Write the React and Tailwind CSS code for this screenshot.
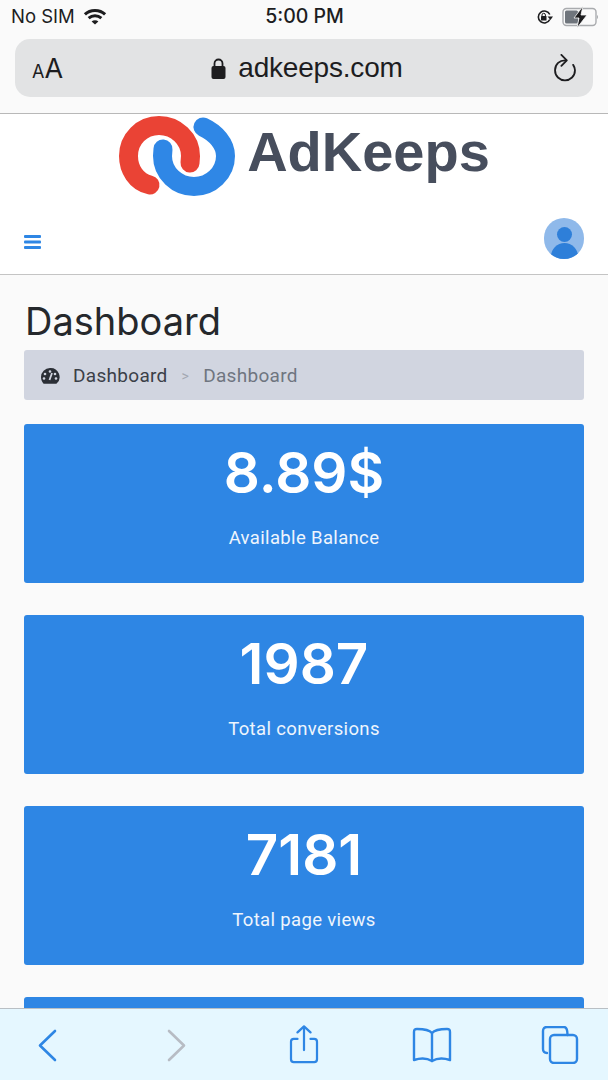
const roboto = { fontFamily: 'Roboto, sans-serif' }
const inter = { fontFamily: 'Inter, sans-serif' }

const stats = [
  { value: '8.89$', label: 'Available Balance' },
  { value: '1987', label: 'Total conversions' },
  { value: '7181', label: 'Total page views' },
  { value: '', label: '' },
]

function StatusBar() {
  return (
    <div className="h-[39px] shrink-0 flex items-center justify-between pl-[11px] pr-[10px] pb-[6px] text-[#1d1d1f] font-['Inter',sans-serif]">
      <div className="w-[200px] flex items-center gap-[8px]">
        <span className="text-[18.5px]">No SIM</span>
        <svg width="24" height="17" viewBox="0 0 22 16" fill="none" stroke="#1d1d1f" strokeWidth="2.8">
          <path d="M1.5 6 C6.5 1 15.5 1 20.5 6" />
          <path d="M5 9.5 C8.5 6.5 13.5 6.5 17 9.5" />
          <path d="M11 15.5 L7.8 12.6 C9.5 11.2 12.5 11.2 14.2 12.6 Z" fill="#1d1d1f" strokeWidth="0" />
        </svg>
      </div>
      <span className="text-[19.5px] font-medium">5:00 PM</span>
      <div className="w-[200px] flex items-center justify-end gap-[8px]">
        <svg width="18" height="16" viewBox="0 0 18 16" fill="none">
          <path d="M13.800 10.500 A6 6 0 1 1 13.800 5.500" stroke="#1d1d1f" strokeWidth="1.600" />
          <path d="M11.500 7.500 L14.500 11 L17 7.500 Z" fill="#1d1d1f" />
          <rect x="5" y="7" width="5.500" height="4.500" rx="0.6" fill="#1d1d1f" />
          <path d="M6 7V6a1.700 1.700 0 0 1 3.400 0v1" stroke="#1d1d1f" strokeWidth="1" />
        </svg>
        <svg width="36" height="22" viewBox="0 0 36 22" fill="none">
          <rect x="1" y="2.500" width="33" height="17" rx="3.5" stroke="#a9abae" strokeWidth="1.4" />
          <rect x="3" y="4.500" width="13" height="13" rx="1.5" fill="#6f757c" />
          <path d="M35 9v4c.7-.4 1-1.100 1-2s-.3-1.600-1-2z" fill="#a9abae" />
          <path d="M21 0 L12 12 H17 L15 22 L25 9 H19 Z" fill="#1d1d1f" stroke="#fafafa" strokeWidth="0.8" />
        </svg>
      </div>
    </div>
  )
}

function UrlBar() {
  return (
    <div className="shrink-0 pb-[16px] border-b border-[#b8b8b8] px-[15px]">
      <div className="h-[58px] rounded-[15px] bg-[#e2e3e4] flex items-center justify-between pl-[17px] pr-[15px] text-[#1d1d1f] font-['Inter',sans-serif]">
        <div className="w-[70px] flex items-baseline">
          <span className="text-[18px] leading-none">A</span>
          <span className="text-[27px] leading-none">A</span>
        </div>
        <div className="flex items-center gap-[12px]">
          <svg width="15" height="21" viewBox="0 0 15 21" fill="none">
            <rect x="0.5" y="8" width="14" height="13" rx="2" fill="#1d1d1f" />
            <path d="M3.500 9V5.500a4 4 0 0 1 8 0V9" stroke="#1d1d1f" strokeWidth="1.8" />
          </svg>
          <span className="text-[28px] leading-none tracking-[-0.2px] font-['Liberation_Sans',sans-serif]">adkeeps.com</span>
        </div>
        <div className="w-[66px] flex justify-end">
          <svg width="26" height="29" viewBox="0 0 26 32" fill="none" stroke="#1d1d1f" strokeWidth="2" strokeLinecap="round" strokeLinejoin="round">
            <path d="M14 7 C7 6.500 2 11.500 2 18 C2 24.500 7 29 13 29 C19 29 24 24.500 24 18 C24 15.500 23 13.500 22 12" />
            <path d="M9 1 L15 7 L9 13" />
          </svg>
        </div>
      </div>
    </div>
  )
}

function Logo() {
  return (
    <div className="h-[84px] shrink-0 bg-white flex items-center justify-center">
      <div className="flex items-center gap-[11px]">
        <svg width="118" height="84" viewBox="0 0 118 84" fill="none" strokeWidth="19" strokeLinecap="round">
          <path d="M32 71 C18 68 10.500 55 10.500 42 C10.500 25 24 11.500 41 11.500 C58 11.500 72.500 25 72.500 42 L72 49" stroke="#ea4335" />
          <path d="M85 13 C98 19 107.500 30 107.500 42 C107.500 59 93 72.500 76 72.500 C59 72.500 44.500 59 44.500 42 L45 35" stroke="#2f87e6" />
        </svg>
        <span className="pb-[8px] text-[56px] leading-none font-bold text-[#474e5d] font-['Liberation_Sans',sans-serif]">AdKeeps</span>
      </div>
    </div>
  )
}

function NavBar() {
  return (
    <div className="h-[77px] shrink-0 bg-white border-b border-[#c4c4c4] flex items-start justify-between px-[24px] pt-[20px]">
      <svg width="17" height="14" viewBox="0 0 17 14" fill="#2e86e4" className="mt-[17px]">
        <rect width="17" height="3" rx="1" />
        <rect y="5.500" width="17" height="3" rx="1" />
        <rect y="11" width="17" height="3" rx="1" />
      </svg>
      <div className="w-[40px] h-[41px] rounded-full bg-[#8fb9ea] overflow-hidden flex flex-col items-center">
        <div className="w-[15px] h-[15px] shrink-0 rounded-full bg-[#2e7fd9] mt-[9px]" />
        <div className="w-[27px] h-[27px] shrink-0 rounded-full bg-[#2e7fd9] mt-[1px]" />
      </div>
    </div>
  )
}

function Breadcrumb() {
  return (
    <div className="h-[50px] rounded-[3px] bg-[#d1d5e0] flex items-center pl-[16px] pt-[2px] text-[19px] tracking-[0.3px]" style={roboto}>
      <svg width="20" height="18" viewBox="0 0 20 18" className="mr-[13px]">
        <path d="M10 1a9 9 0 0 0-9 9c0 2.600 1 5 2.600 6.800h12.800A9 9 0 0 0 10 1z" fill="#2b2f36" />
        <circle cx="10" cy="4.500" r="1.300" fill="#d1d5e0" />
        <circle cx="5" cy="7" r="1.300" fill="#d1d5e0" />
        <circle cx="15" cy="7" r="1.300" fill="#d1d5e0" />
        <circle cx="4" cy="11.500" r="1.300" fill="#d1d5e0" />
        <circle cx="16" cy="11.500" r="1.300" fill="#d1d5e0" />
        <path d="M12 6 L9.500 13" stroke="#d1d5e0" strokeWidth="1.800" />
      </svg>
      <span className="text-[#3b4048]">Dashboard</span>
      <span className="mx-[14px] text-[14px] text-[#a3a8b2]">&gt;</span>
      <span className="text-[#6f7580]">Dashboard</span>
    </div>
  )
}

function StatCard({ value, label }) {
  return (
    <div className="h-[159px] shrink-0 rounded-[3px] bg-[#2e86e4] text-white text-center pt-[16px]">
      <div className="text-[56.5px] leading-[66px] font-semibold" style={inter}>{value}</div>
      <div className="mt-[19px] text-[18.5px] leading-[27px] tracking-[0.35px] text-[#eef5fd]" style={roboto}>{label}</div>
    </div>
  )
}

function Toolbar() {
  return (
    <div className="h-[72px] shrink-0 bg-[#e5f7ff] border-t border-[#b9bfc4] flex items-start pl-[37px]">
      <svg width="20" height="33" viewBox="0 0 20 33" fill="none" stroke="#2e86e4" strokeWidth="2.600" strokeLinecap="round" strokeLinejoin="round" className="mt-[20px]">
        <path d="M18 2 L3 16.500 L18 31" />
      </svg>
      <svg width="20" height="33" viewBox="0 0 20 33" fill="none" stroke="#b7bcc4" strokeWidth="2.600" strokeLinecap="round" strokeLinejoin="round" className="mt-[20px] ml-[110px]">
        <path d="M2 2 L17 16.500 L2 31" />
      </svg>
      <svg width="32" height="39" viewBox="0 0 32 42" fill="none" stroke="#2e86e4" strokeWidth="2.400" strokeLinecap="round" strokeLinejoin="round" className="mt-[16px] ml-[101px]">
        <path d="M9 15 H5 a3 3 0 0 0-3 3 V37 a3 3 0 0 0 3 3 H27 a3 3 0 0 0 3-3 V18 a3 3 0 0 0-3-3 H23" />
        <path d="M16 27 V2 M9 8 L16 1.500 L23 8" />
      </svg>
      <svg width="40" height="36" viewBox="0 0 40 36" fill="none" stroke="#2e86e4" strokeWidth="2.400" strokeLinecap="round" strokeLinejoin="round" className="mt-[18px] ml-[92px]">
        <path d="M20 6 C17 2.500 11 2 5 2 Q2 2 2 5 V33 C8 31 15 31 20 34 C25 31 32 31 38 33 V5 Q38 2 35 2 C29 2 23 2.500 20 6 Z" />
        <path d="M20 6 V34" />
      </svg>
      <svg width="38" height="38" viewBox="0 0 38 38" fill="none" stroke="#2e86e4" strokeWidth="2.400" strokeLinecap="round" strokeLinejoin="round" className="mt-[17px] ml-[89px]">
        <path d="M6 27 Q2 27 2 23 V5 Q2 1 6 1 H23 Q26.500 1 26.500 9" />
        <rect x="9" y="9" width="27" height="28" rx="4" />
      </svg>
    </div>
  )
}

export default function App() {
  return (
    <div className="w-[608px] h-[1080px] flex flex-col overflow-hidden bg-[#fafafa]">
      <StatusBar />
      <UrlBar />
      <Logo />
      <NavBar />
      <main className="flex-1 min-h-0 overflow-hidden px-[24px] pt-[22px]">
        <h1 className="text-[38px] leading-[49px] mb-[4px] text-[#25282c] font-normal pl-[1px]" style={inter}>Dashboard</h1>
        <Breadcrumb />
        <div className="mt-[24px] flex flex-col gap-[32px]">
          {stats.map((s, i) => (
            <StatCard key={i} value={s.value} label={s.label} />
          ))}
        </div>
      </main>
      <Toolbar />
    </div>
  )
}
